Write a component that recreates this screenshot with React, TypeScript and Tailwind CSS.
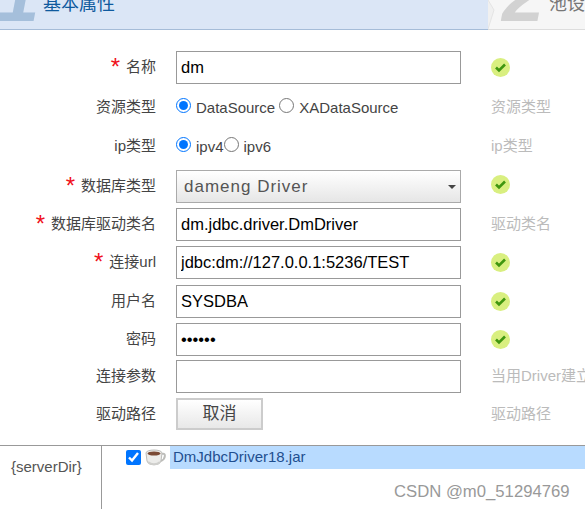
import React from "react";

const LABEL_FONT = "font-['Liberation_Sans','Noto_Sans_CJK_SC',sans-serif]";

const CheckIcon: React.FC = () => (
  <svg width="19" height="19" viewBox="0 0 19 19" className="block">
    <circle cx="9.5" cy="9.5" r="9.5" fill="#d9ef80" />
    <path d="M5 9.5 L8 12.5 L14 6.5" fill="none" stroke="#3f960f" strokeWidth="2.6" />
  </svg>
);

const CupIcon: React.FC = () => (
  <svg width="21" height="18" viewBox="0 0 21 18" className="block">
    <path d="M1 4 C1 0 17 0 17 4 L16 12 C15 17 3 17 2 12 Z" fill="#ececea" stroke="#bdbdba" />
    <ellipse cx="9" cy="4.5" rx="6.5" ry="2" fill="#7a4a35" />
    <path d="M17 5 C21 3 21 10 16 12" fill="none" stroke="#bdbdba" strokeWidth="2" />
    <path d="M3 13 C6 16 12 16 15 13" fill="none" stroke="#cfcfcc" strokeWidth="2" />
  </svg>
);

const Row: React.FC<{
  label: string;
  required?: boolean;
  height: string;
  hint?: string;
  ok?: boolean;
  okClass?: string;
  children: React.ReactNode;
}> = ({ label, required, height, hint, ok, okClass = "", children }) => (
  <div className={`flex items-center ${height}`}>
    <div className={`w-[156px] shrink-0 flex items-center justify-end text-[15px] text-[#444] whitespace-nowrap ${LABEL_FONT}`}>
      {required && <span className="text-[#f01020] text-[24px] leading-[20px] h-[20px] -mt-[2px] mr-[6px] font-['Liberation_Sans']">*</span>}
      <span>{label}</span>
    </div>
    <div className="w-[285px] ml-[20px] shrink-0">{children}</div>
    <div className={`ml-[30px] min-w-0 text-[15px] text-[#bbb] whitespace-nowrap ${LABEL_FONT} ${okClass}`}>
      {ok ? <CheckIcon /> : hint}
    </div>
  </div>
);

const TextBox: React.FC<{ value: string; type?: string }> = ({ value, type = "text" }) => (
  <input
    type={type}
    value={value}
    readOnly
    className="block w-full h-[33px] border border-[#999] bg-white px-[4px] text-[16.5px] text-black outline-none font-['Liberation_Sans',sans-serif]"
  />
);

export default function App() {
  return (
    <div className="relative w-[585px] h-[509px] overflow-hidden bg-white font-['Liberation_Sans',sans-serif]">
      {/* Steps */}
      <div className="relative flex h-[30px] overflow-hidden">
        <div className="w-[488px] shrink-0 flex items-end bg-[#dbe6f6] border-b border-[#a5bcd8] overflow-hidden">
          <span className="w-[43px] text-[76px] leading-[60px] italic font-bold text-[#a5bfdb] mb-[4px] -ml-[3px] mr-[3px]">1</span>
          <span className={`text-[18px] leading-[24px] mb-[13px] text-[#0f5a9e] whitespace-nowrap ${LABEL_FONT}`}>基本属性</span>
        </div>
        <svg width="7" height="29" viewBox="0 0 7 29" className="absolute left-[488px] top-0">
          <path d="M0 0 L6 10 L0 29" fill="#f0f0f0" stroke="#e4e4e4" />
        </svg>
        <div className="flex-1 flex items-end bg-[#f6f6f6] border-b border-[#ddd] overflow-hidden">
          <span className="w-[61px] pl-[14px] text-[76px] leading-[60px] italic font-bold text-[#d2d2d2] mb-[4px]">2</span>
          <span className={`text-[18px] leading-[24px] mb-[13px] text-[#777] whitespace-nowrap ${LABEL_FONT}`}>池设</span>
        </div>
      </div>

      {/* Form */}
      <div className="pt-[21px]">
        <Row label="名称" required height="h-[33px]" ok>
          <TextBox value="dm" />
        </Row>
        <Row label="资源类型" height="h-[47px]" hint="资源类型">
          <div className="flex items-center text-[15px] text-[#444]">
            <input type="radio" checked readOnly className="w-[15px] h-[15px] m-0 -mt-[4px] accent-[#0075ff]" />
            <span className="ml-[5px] mt-[2px]">DataSource</span>
            <input type="radio" readOnly className="w-[15px] h-[15px] ml-[4px] -mt-[4px] accent-[#0075ff]" />
            <span className="ml-[5px] mt-[2px]">XADataSource</span>
          </div>
        </Row>
        <Row label="ip类型" height="h-[30px]" hint="ip类型">
          <div className="flex items-center text-[15px] text-[#444]">
            <input type="radio" checked readOnly className="w-[15px] h-[15px] m-0 -mt-[4px] accent-[#0075ff]" />
            <span className="ml-[5px] mt-[2px]">ipv4</span>
            <input type="radio" readOnly className="w-[15px] h-[15px] -mt-[4px] accent-[#0075ff]" />
            <span className="ml-[5px] mt-[2px]">ipv6</span>
          </div>
        </Row>
        <div className="h-[9px]" />
        <Row label="数据库类型" required height="h-[33px]" ok okClass="-mt-[4px]">
          <div className="flex items-center justify-between h-[33px] border border-[#aaa] bg-gradient-to-b from-white to-[#e6e6e6] pl-[7px] pr-[3px] text-[17px] tracking-[1px] text-[#555]">
            <span>dameng Driver</span>
            <span className="w-0 h-0 mr-[1px] border-x-[4px] border-x-transparent border-t-[4px] border-t-[#444]" />
          </div>
        </Row>
        <div className="mt-[5px]">
          <Row label="数据库驱动类名" required height="h-[33px]" hint="驱动类名">
            <TextBox value="dm.jdbc.driver.DmDriver" />
          </Row>
        </div>
        <div className="mt-[5px]">
          <Row label="连接url" required height="h-[33px]" ok>
            <TextBox value="jdbc:dm://127.0.0.1:5236/TEST" />
          </Row>
        </div>
        <div className="mt-[6px]">
          <Row label="用户名" height="h-[33px]" ok>
            <TextBox value="SYSDBA" />
          </Row>
        </div>
        <div className="mt-[5px]">
          <Row label="密码" height="h-[33px]" ok>
            <TextBox type="password" value="SYSDBA" />
          </Row>
        </div>
        <div className="mt-[4px]">
          <Row label="连接参数" height="h-[33px]" hint="当用Driver建立连接时">
            <TextBox value="" />
          </Row>
        </div>
        <div className="mt-[5px]">
          <Row label="驱动路径" height="h-[32px]" hint="驱动路径">
            <button className={`block w-[87px] h-[32px] border-2 border-[#ccc] bg-gradient-to-b from-white to-[#e8e8e8] text-[17px] text-[#444] ${LABEL_FONT}`}>
              取消
            </button>
          </Row>
        </div>
      </div>

      {/* Driver tree */}
      <div className="flex mt-[15px] h-[64px] border-t border-[#999]">
        <div className="w-[102px] shrink-0 border-r border-[#999] pt-[10px] pl-[11px] text-[15px] text-[#555]">
          {"{serverDir}"}
        </div>
        <div className="flex-1 flex items-start h-[24px] pl-[24px]">
          <input type="checkbox" checked readOnly className="w-[15px] h-[15px] m-0 mt-[4px] accent-[#0075ff]" />
          <span className="ml-[4px] mt-[3px]"><CupIcon /></span>
          <div className="flex-1 ml-[4px] h-[23px] leading-[22px] bg-[#b8dbff] pl-[3px] text-[15px] text-[#1f4f8f]">DmJdbcDriver18.jar</div>
        </div>
      </div>

      {/* Watermark */}
      <div className="absolute left-[394px] top-[482px] text-[16.7px] leading-[20px] text-[#999] whitespace-nowrap">CSDN @m0_51294769</div>
    </div>
  );
}
